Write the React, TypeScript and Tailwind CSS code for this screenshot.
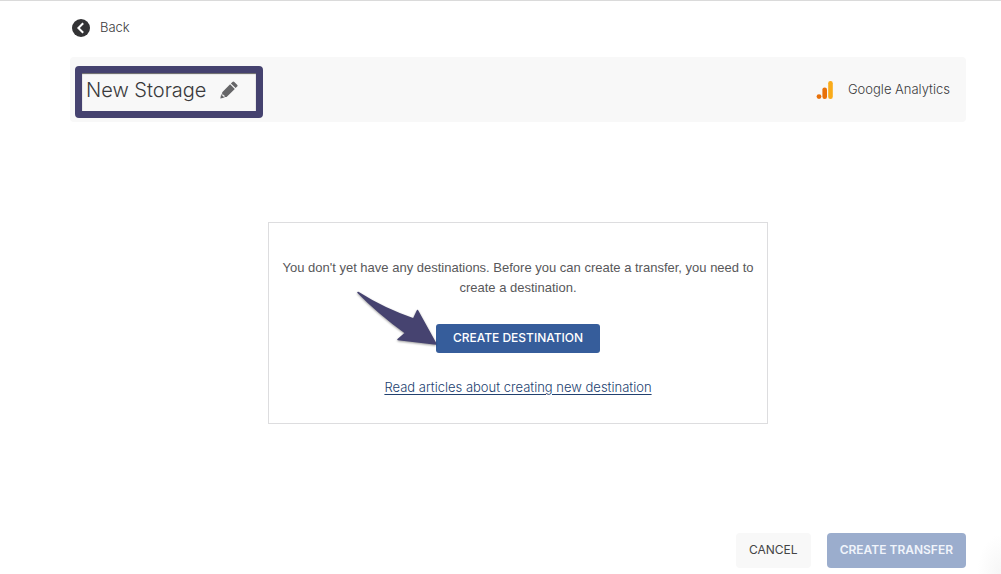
import type { ReactNode } from "react";

const DESTINATION_DOCS_URL = "#destination-articles";

function BackIcon() {
  return (
    <svg aria-hidden viewBox="0 0 18 18" className="size-[18px]">
      <circle cx="9" cy="9" r="9" fill="#333335" />
      <path
        d="M11.2 4.2 6.4 9l4.8 4.8"
        fill="none"
        stroke="#fff"
        strokeWidth="2"
      />
    </svg>
  );
}

function PencilIcon() {
  return (
    <svg aria-hidden viewBox="0 0 18 18" className="size-[18px]" fill="#666668">
      <path d="M12.4.9a1.3 1.3 0 0 1 1.9 0l2.8 2.8a1.3 1.3 0 0 1 0 1.9l-1.5 1.5-4.7-4.7z" />
      <path d="m10.1 3.2 4.7 4.7-8.2 8.2-2-.1-.4-2-2.1-.5.1-2.3z" />
      <path d="m1.3 12.6-1 5 5-1.1-1.7-.2-.3-1.6-1.5-.3z" />
    </svg>
  );
}

function AnalyticsIcon() {
  return (
    <svg aria-hidden viewBox="0 0 18 18" className="size-[18px]">
      <rect x="12.2" y="0" width="4.6" height="18" rx="2.2" fill="#f9ab1a" />
      <rect x="6.4" y="6.4" width="4.6" height="11.6" rx="2.2" fill="#e8710a" />
      <circle cx="3" cy="15.6" r="2.4" fill="#e8710a" />
    </svg>
  );
}

function PointerArrow() {
  return (
    <svg
      aria-hidden
      viewBox="0 0 84 60"
      className="pointer-events-none absolute right-full bottom-1 h-[60px] w-[84px] drop-shadow-[0_1px_1px_rgba(0,0,0,0.4)]"
    >
      <path
        d="M6 3.5Q32 20 61.5 30L65.5 21.5 84 55 46 50.5 53.5 44Q26 24 6 3.5Z"
        fill="#464370"
        stroke="#464370"
        strokeWidth="1.5"
        strokeLinejoin="round"
      />
    </svg>
  );
}

function Highlight({ children }: { children: ReactNode }) {
  return (
    <div className="relative flex items-center gap-[14px]">
      {children}
      <span
        aria-hidden
        className="pointer-events-none absolute -top-2 -right-[25px] -bottom-3 -left-[11px] rounded border-[7px] border-[#45426f] shadow-[inset_0_1px_1px_rgba(0,0,0,0.6)]"
      />
    </div>
  );
}

export default function App() {
  return (
    <main className="relative flex min-h-screen flex-col border-t border-[#dadada] bg-white pt-4 pr-[35px] pb-[6px] pl-[70px] font-['Inter',sans-serif] text-[13px] font-light text-[#3a3a3c]">
      <a
        href="#back"
        className="ml-[2px] flex h-[22px] items-center gap-[10px] self-start"
      >
        <BackIcon />
        Back
      </a>

      <header className="mt-[18px] flex h-[65px] items-center justify-between rounded bg-[#f8f8f8] px-4">
        <Highlight>
          <h1 className="text-[20px] leading-8">New Storage</h1>
          <button type="button" aria-label="Rename storage">
            <PencilIcon />
          </button>
        </Highlight>
        <div className="flex items-center gap-[14px]">
          <AnalyticsIcon />
          Google Analytics
        </div>
      </header>

      <section className="mx-auto mt-[100px] flex w-full max-w-[500px] flex-col items-center border border-[#dddddf] px-2 pt-[35px] pb-[26px] text-center">
        <p className="font-['Liberation_Sans',sans-serif] leading-5 font-normal text-[#58585a]">
          You don't yet have any destinations. Before you can create a transfer,
          you need to create a destination.
        </p>
        <div className="relative mt-[26px]">
          <button
            type="button"
            className="h-[29px] rounded-[3px] bg-[#365d9b] px-[17px] pb-[2px] text-[12px] font-medium text-white"
          >
            CREATE DESTINATION
          </button>
          <PointerArrow />
        </div>
        <a
          href={DESTINATION_DOCS_URL}
          className="mt-6 leading-5 text-[#22416f] underline underline-offset-2"
        >
          Read articles about creating new destination
        </a>
      </section>

      <footer className="mt-auto flex justify-end gap-4 text-[12px]">
        <button
          type="button"
          className="h-[35px] rounded bg-[#f8f8f8] px-[13px] pb-[2px] font-normal text-[#444446]"
        >
          CANCEL
        </button>
        <button
          type="button"
          disabled
          className="h-[35px] rounded bg-[#9badcd] px-[13px] pb-[2px] font-semibold text-[#f0f4fb]"
        >
          CREATE TRANSFER
        </button>
      </footer>

      {/* Soft shade in the window corner */}
      <div
        aria-hidden
        className="pointer-events-none absolute right-0 bottom-0 h-10 w-6 bg-[radial-gradient(ellipse_at_bottom_right,#f6f6f6,transparent_70%)]"
      />
    </main>
  );
}
